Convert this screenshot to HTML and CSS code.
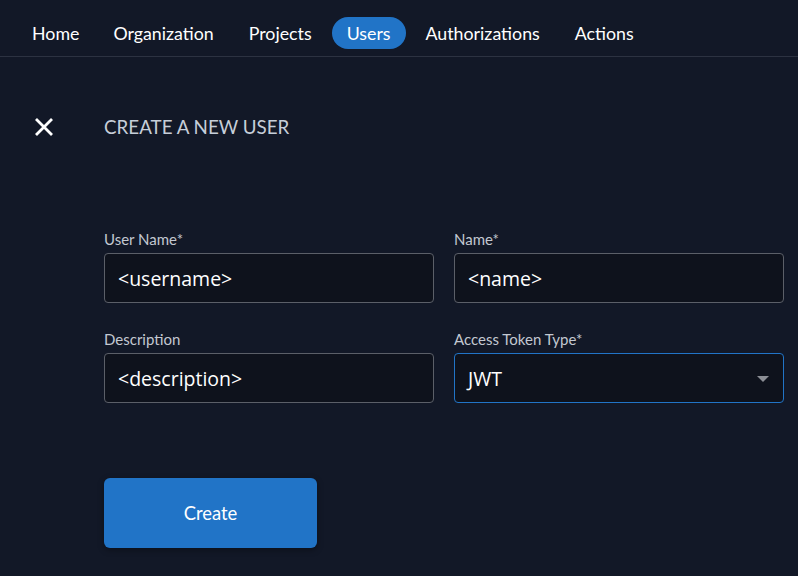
FILE: index.html
```html
<!DOCTYPE html>
<html>
<head>
<meta charset="utf-8">
<link rel="stylesheet" href="styles.css">
</head>
<body>
<nav class="nav">
  <a class="nav-item">Home</a>
  <a class="nav-item">Organization</a>
  <a class="nav-item">Projects</a>
  <a class="nav-item active">Users</a>
  <a class="nav-item">Authorizations</a>
  <a class="nav-item">Actions</a>
</nav>
<main class="page">
  <header class="head">
    <span class="close">
      <svg width="20" height="18" viewBox="0 0 20 18"><path d="M2 1 L18 17 M18 1 L2 17" stroke="#ffffff" stroke-width="2.8" fill="none"/></svg>
    </span>
    <h1 class="title">CREATE A NEW USER</h1>
  </header>
  <form class="form">
    <div class="grid">
      <div class="field">
        <label class="label">User Name*</label>
        <div class="input">&lt;username&gt;</div>
      </div>
      <div class="field">
        <label class="label">Name*</label>
        <div class="input">&lt;name&gt;</div>
      </div>
      <div class="field">
        <label class="label">Description</label>
        <div class="input">&lt;description&gt;</div>
      </div>
      <div class="field">
        <label class="label">Access Token Type*</label>
        <div class="input select">JWT<span class="caret"></span></div>
      </div>
    </div>
    <button class="btn" type="button">Create</button>
  </form>
</main>
</body>
</html>
```
FILE: styles.css
```css
* { box-sizing: border-box; }
html, body { margin: 0; padding: 0; }
body {
  background: #121827;
  width: 798px;
  height: 576px;
  overflow: hidden;
  font-family: Lato, "Liberation Sans", sans-serif;
  color: #ffffff;
}
.nav {
  display: flex;
  align-items: flex-start;
  gap: 5px;
  height: 57px;
  padding-left: 17px;
  padding-top: 17px;
  border-bottom: 1px solid #2c3241;
}
.nav-item {
  display: block;
  height: 32px;
  line-height: 32px;
  padding: 0 15px;
  border-radius: 16px;
  font-size: 17.8px;
  color: #ffffff;
}
.nav-item:first-child { padding-right: 14px; }
.nav-item.active { background: #2174c7; }
.page { padding: 0; }
.head {
  display: flex;
  align-items: center;
  height: 34px;
  margin-top: 52px;
}
.close {
  display: flex;
  width: 104px;
  padding-left: 34px;
  padding-top: 2px;
}
.title {
  margin: 0;
  font-size: 18.8px;
  font-weight: 400;
  color: #c6ced9;
}
.form {
  padding-left: 104px;
  margin-top: 87px;
}
.grid {
  display: grid;
  grid-template-columns: 330px 330px;
  column-gap: 20px;
  row-gap: 27px;
}
.field { display: flex; flex-direction: column; }
.label {
  font-size: 15px;
  line-height: 19px;
  color: #c3c8d1;
  margin-bottom: 4px;
}
.input {
  height: 50px;
  border: 1px solid #5b5f68;
  border-radius: 4px;
  background: #0e121c;
  padding: 0 13px;
  display: flex;
  align-items: center;
  font-family: "Open Sans", "Noto Sans", sans-serif;
  font-size: 19.5px;
  color: #ffffff;
  position: relative;
}
.select { border-color: #2174c7; }
.caret {
  position: absolute;
  right: 14px;
  top: 22px;
  width: 0;
  height: 0;
  border-left: 6px solid transparent;
  border-right: 6px solid transparent;
  border-top: 6px solid #8b8e95;
}
.btn {
  margin-top: 75px;
  width: 213px;
  height: 70px;
  border: none;
  border-radius: 6px;
  background: #2174c7;
  color: #ffffff;
  font-family: Lato, "Liberation Sans", sans-serif;
  font-size: 18.4px;
  box-shadow: 0 2px 6px rgba(0,0,0,0.35);
}
```
